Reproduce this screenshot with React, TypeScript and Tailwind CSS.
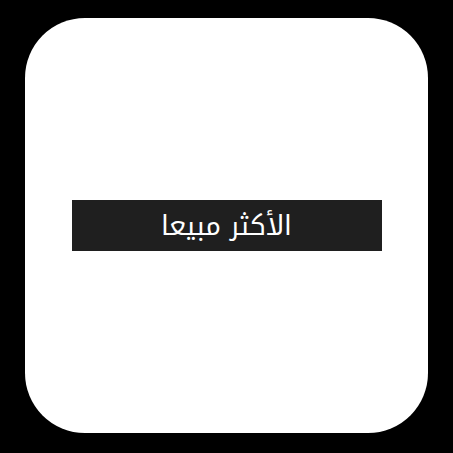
export default function App() {
  return (
    <div className="h-[453px] w-[453px] bg-black pl-[25px] pt-[18px]">
      <div className="flex h-[415px] w-[403px] items-center justify-center rounded-[60px] bg-white">
        <div
          dir="rtl"
          className="flex h-[51px] w-[310px] items-center justify-center bg-[#1f1f1f] pt-[2px] text-[27px] text-white"
          style={{ fontFamily: '"Noto Kufi Arabic", "Droid Arabic Kufi", "DejaVu Sans", sans-serif' }}
        >
          الأكثر مبيعا
        </div>
      </div>
    </div>
  );
}
